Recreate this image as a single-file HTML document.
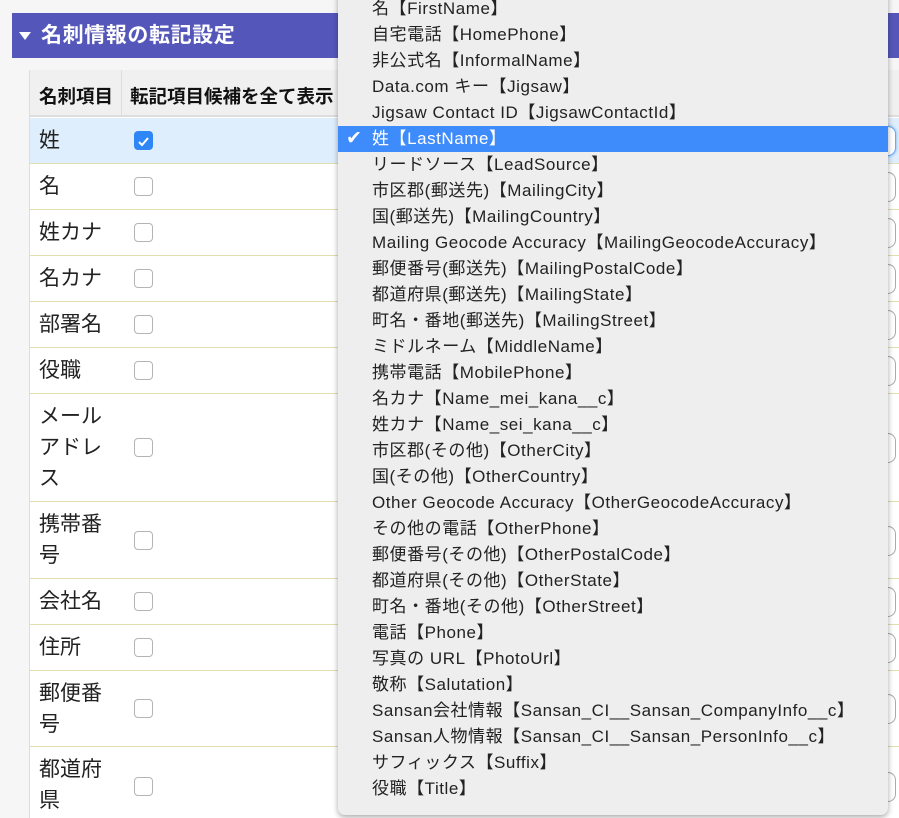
<!DOCTYPE html>
<html><head><meta charset="utf-8"><style>
*{margin:0;padding:0;box-sizing:border-box}
html,body{width:899px;height:818px;overflow:hidden}
body{background:#f6f6f6;font-family:"Liberation Sans","Noto Sans CJK JP",sans-serif;position:relative}
.bar{position:absolute;left:12px;top:13px;width:900px;height:45px;background:#5457b9;color:#fff;font-weight:bold;font-size:21px;letter-spacing:0.6px;line-height:45px;padding-left:29px}
.bar:before{content:"";position:absolute;left:7px;top:19px;border-left:6px solid transparent;border-right:6px solid transparent;border-top:8px solid #fff}
.tbl{position:absolute;left:29px;top:70px;width:880px;height:760px;background:#fff;border-left:1px solid #ddd}
.hd{position:absolute;left:0;top:0;width:880px;height:47px;background:#f0f0f0;border-bottom:2px solid #ddd;font-weight:bold;font-size:18.5px;color:#111}
.hd span{position:absolute;top:13px}
.vl{position:absolute;left:91px;top:0;width:1px;height:47px;background:#ddd}
.row{position:absolute;left:0;width:880px;border-bottom:1px solid #e3ddb2;font-size:21px;color:#222}
.row .l{position:absolute;left:9px;line-height:31px;width:80px}
.cb{position:absolute;left:104px;width:19px;height:19px;border:1px solid #b4b4b4;border-radius:4px;background:#fff}
.cb.on{background:#2f86f6;border-color:#2f86f6}
.sel{position:absolute;left:826px;width:40px;height:30px;border:1px solid #aaa;border-radius:8px;background:#fff}
.dd{position:absolute;left:338px;top:-6px;width:550px;height:821px;background:#eeeeee;border-radius:0 0 7px 7px;box-shadow:0 2px 6px rgba(0,0,0,.35);font-size:17px;letter-spacing:0.55px;color:#222}
.it{position:absolute;left:0;width:550px;height:26px;line-height:26px;padding-left:34px;white-space:nowrap}
.it.hl{background:#3e8bfc;color:#fff}
.it.hl:before{content:"✔";position:absolute;left:8px;font-size:19px}
</style></head><body>
<div class="tbl">
<div class="hd"><span style="left:9px">名刺項目</span><div class="vl"></div><span style="left:100px">転記項目候補を全て表示</span></div>
<div class="row" style="top:48px;height:46px;background:#dfeefc"><span class="l" style="top:7px">姓</span><div class="cb on" style="top:13px"><svg width="17" height="17" viewBox="0 0 17 17"><path d="M4 9l3 3 6-7" stroke="#fff" stroke-width="2" fill="none"/></svg></div><div class="sel" style="top:8px;border-color:#6aa8f5;box-shadow:0 0 3px #6aa8f5"></div></div>
<div class="row" style="top:94px;height:46px"><span class="l" style="top:7px">名</span><div class="cb" style="top:13px"></div><div class="sel" style="top:8px"></div></div>
<div class="row" style="top:140px;height:46px"><span class="l" style="top:7px">姓カナ</span><div class="cb" style="top:13px"></div><div class="sel" style="top:8px"></div></div>
<div class="row" style="top:186px;height:46px"><span class="l" style="top:7px">名カナ</span><div class="cb" style="top:13px"></div><div class="sel" style="top:8px"></div></div>
<div class="row" style="top:232px;height:46px"><span class="l" style="top:7px">部署名</span><div class="cb" style="top:13px"></div><div class="sel" style="top:8px"></div></div>
<div class="row" style="top:278px;height:46px"><span class="l" style="top:7px">役職</span><div class="cb" style="top:13px"></div><div class="sel" style="top:8px"></div></div>
<div class="row" style="top:324px;height:108px"><span class="l" style="top:7px">メールアドレス</span><div class="cb" style="top:44px"></div><div class="sel" style="top:39px"></div></div>
<div class="row" style="top:432px;height:77px"><span class="l" style="top:7px">携帯番号</span><div class="cb" style="top:29px"></div><div class="sel" style="top:24px"></div></div>
<div class="row" style="top:509px;height:46px"><span class="l" style="top:7px">会社名</span><div class="cb" style="top:13px"></div><div class="sel" style="top:8px"></div></div>
<div class="row" style="top:555px;height:46px"><span class="l" style="top:7px">住所</span><div class="cb" style="top:13px"></div><div class="sel" style="top:8px"></div></div>
<div class="row" style="top:601px;height:76px"><span class="l" style="top:7px">郵便番号</span><div class="cb" style="top:28px"></div><div class="sel" style="top:23px"></div></div>
<div class="row" style="top:677px;height:90px"><span class="l" style="top:7px">都道府県</span><div class="cb" style="top:30px"></div><div class="sel" style="top:25px"></div></div>
</div>
<div class="bar">名刺情報の転記設定</div>
<div class="dd">
<div class="it" style="top:2px">名【FirstName】</div>
<div class="it" style="top:28px">自宅電話【HomePhone】</div>
<div class="it" style="top:54px">非公式名【InformalName】</div>
<div class="it" style="top:80px">Data.com キー【Jigsaw】</div>
<div class="it" style="top:106px">Jigsaw Contact ID【JigsawContactId】</div>
<div class="it hl" style="top:132px">姓【LastName】</div>
<div class="it" style="top:158px">リードソース【LeadSource】</div>
<div class="it" style="top:184px">市区郡(郵送先)【MailingCity】</div>
<div class="it" style="top:210px">国(郵送先)【MailingCountry】</div>
<div class="it" style="top:236px">Mailing Geocode Accuracy【MailingGeocodeAccuracy】</div>
<div class="it" style="top:262px">郵便番号(郵送先)【MailingPostalCode】</div>
<div class="it" style="top:288px">都道府県(郵送先)【MailingState】</div>
<div class="it" style="top:314px">町名・番地(郵送先)【MailingStreet】</div>
<div class="it" style="top:340px">ミドルネーム【MiddleName】</div>
<div class="it" style="top:366px">携帯電話【MobilePhone】</div>
<div class="it" style="top:392px">名カナ【Name_mei_kana__c】</div>
<div class="it" style="top:418px">姓カナ【Name_sei_kana__c】</div>
<div class="it" style="top:444px">市区郡(その他)【OtherCity】</div>
<div class="it" style="top:470px">国(その他)【OtherCountry】</div>
<div class="it" style="top:496px">Other Geocode Accuracy【OtherGeocodeAccuracy】</div>
<div class="it" style="top:522px">その他の電話【OtherPhone】</div>
<div class="it" style="top:548px">郵便番号(その他)【OtherPostalCode】</div>
<div class="it" style="top:574px">都道府県(その他)【OtherState】</div>
<div class="it" style="top:600px">町名・番地(その他)【OtherStreet】</div>
<div class="it" style="top:626px">電話【Phone】</div>
<div class="it" style="top:652px">写真の URL【PhotoUrl】</div>
<div class="it" style="top:678px">敬称【Salutation】</div>
<div class="it" style="top:704px">Sansan会社情報【Sansan_CI__Sansan_CompanyInfo__c】</div>
<div class="it" style="top:730px">Sansan人物情報【Sansan_CI__Sansan_PersonInfo__c】</div>
<div class="it" style="top:756px">サフィックス【Suffix】</div>
<div class="it" style="top:782px">役職【Title】</div>
</div>
</body></html>
